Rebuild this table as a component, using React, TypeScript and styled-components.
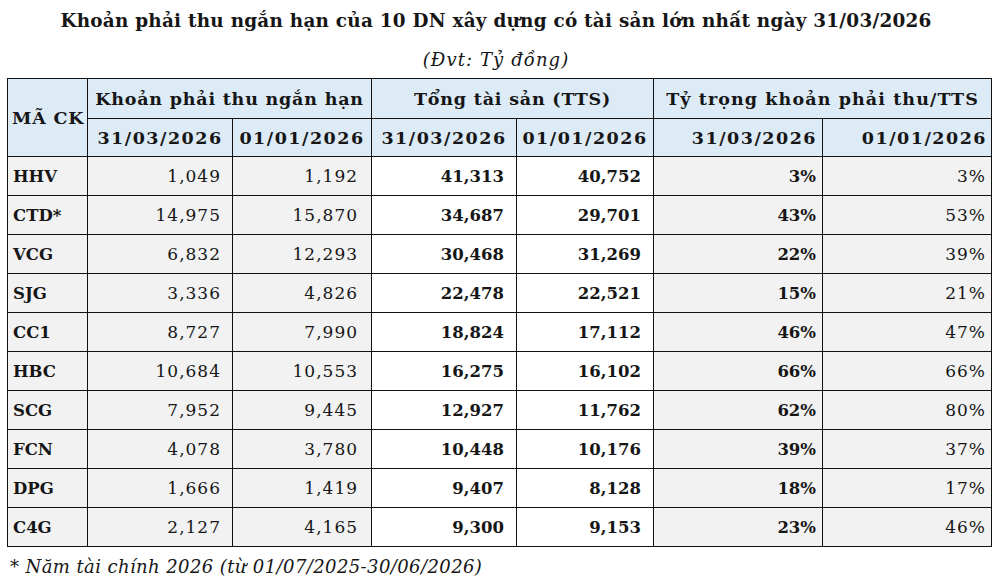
import React from "react";
import styled, { createGlobalStyle } from "styled-components";

const GlobalStyle = createGlobalStyle`
  html, body { margin: 0; padding: 0; background: #ffffff; }
  body { font-family: "DejaVu Serif", "Liberation Serif", serif; color: #161616; }
`;

const Page = styled.div`
  width: 992px;
  height: 586px;
  box-sizing: border-box;
  padding: 0 0 0 7px;
  display: flex;
  flex-direction: column;
`;

const Title = styled.h1`
  margin: 0 0 0 -7px;
  height: 40px;
  line-height: 42px;
  font-size: 18.4px;
  font-weight: 700;
  text-align: center;
  letter-spacing: 0.25px;
`;

const Unit = styled.div`
  margin: 0 0 0 -7px;
  height: 38px;
  line-height: 40px;
  font-size: 18px;
  font-style: italic;
  text-align: center;
  letter-spacing: 1.1px;
`;

const Table = styled.table`
  border-collapse: collapse;
  width: 984px;
  table-layout: fixed;
  font-size: 17px;
`;

const Th = styled.th<{ $align?: string; $pr?: number; $h?: number; $ls?: number }>`
  background: #ddebf7;
  border: 1px solid #111;
  font-weight: 700;
  font-size: 17.5px;
  letter-spacing: ${(p) => p.$ls ?? 0.8}px;
  height: ${(p) => p.$h ?? 38}px;
  padding: 0 ${(p) => p.$pr ?? 2}px 0 ${(p) => (p.$align === "left" ? 4 : 2)}px;
  text-align: ${(p) => p.$align ?? "center"};
  white-space: nowrap;
  box-sizing: border-box;
`;

const Td = styled.td<{ $bold?: boolean; $gray?: boolean; $align?: string; $pr?: number }>`
  background: ${(p) => (p.$gray ? "#f2f2f2" : "#ffffff")};
  border: 1px solid #111;
  font-weight: ${(p) => (p.$bold ? 700 : 400)};
  font-size: ${(p) => (p.$bold ? 16.5 : 17)}px;
  letter-spacing: ${(p) => (p.$bold ? 0 : 1)}px;
  height: 39px;
  padding: 0 ${(p) => p.$pr ?? 5}px 0 5px;
  text-align: ${(p) => p.$align ?? "right"};
  white-space: nowrap;
  box-sizing: border-box;
`;

const Footnote = styled.div`
  margin: 0;
  padding-left: 3px;
  height: 40px;
  line-height: 40px;
  font-size: 18px;
  font-style: italic;
  letter-spacing: 0.4px;
`;

const rows: [string, string, string, string, string, string, string][] = [
  ["HHV", "1,049", "1,192", "41,313", "40,752", "3%", "3%"],
  ["CTD*", "14,975", "15,870", "34,687", "29,701", "43%", "53%"],
  ["VCG", "6,832", "12,293", "30,468", "31,269", "22%", "39%"],
  ["SJG", "3,336", "4,826", "22,478", "22,521", "15%", "21%"],
  ["CC1", "8,727", "7,990", "18,824", "17,112", "46%", "47%"],
  ["HBC", "10,684", "10,553", "16,275", "16,102", "66%", "66%"],
  ["SCG", "7,952", "9,445", "12,927", "11,762", "62%", "80%"],
  ["FCN", "4,078", "3,780", "10,448", "10,176", "39%", "37%"],
  ["DPG", "1,666", "1,419", "9,407", "8,128", "18%", "17%"],
  ["C4G", "2,127", "4,165", "9,300", "9,153", "23%", "46%"],
];

const widths = [80, 145, 139, 145, 137, 169, 169];
const padRight = [5, 11, 13, 12, 12, 6, 5];
const boldCols = [true, false, false, true, true, true, false];
const grayCols = [true, true, true, false, false, true, true];

export default function App() {
  return (
    <>
      <GlobalStyle />
      <Page>
        <Title>Khoản phải thu ngắn hạn của 10 DN xây dựng có tài sản lớn nhất ngày 31/03/2026</Title>
        <Unit>(Đvt: Tỷ đồng)</Unit>
        <Table>
          <colgroup>
            {widths.map((w, i) => (
              <col key={i} style={{ width: w }} />
            ))}
          </colgroup>
          <thead>
            <tr>
              <Th rowSpan={2} $align="left" $h={40}>MÃ CK</Th>
              <Th colSpan={2} $h={40}>Khoản phải thu ngắn hạn</Th>
              <Th colSpan={2} $h={40}>Tổng tài sản (TTS)</Th>
              <Th colSpan={2} $h={40} $ls={1.1}>Tỷ trọng khoản phải thu/TTS</Th>
            </tr>
            <tr>
              <Th $ls={1.5}>31/03/2026</Th>
              <Th $ls={1.5}>01/01/2026</Th>
              <Th $ls={1.5}>31/03/2026</Th>
              <Th $ls={1.5}>01/01/2026</Th>
              <Th $align="right" $pr={5} $ls={1.5}>31/03/2026</Th>
              <Th $align="right" $pr={4} $ls={1.5}>01/01/2026</Th>
            </tr>
          </thead>
          <tbody>
            {rows.map((r) => (
              <tr key={r[0]}>
                {r.map((v, i) => (
                  <Td
                    key={i}
                    $bold={boldCols[i]}
                    $gray={grayCols[i]}
                    $align={i === 0 ? "left" : "right"}
                    $pr={padRight[i]}
                  >
                    {v}
                  </Td>
                ))}
              </tr>
            ))}
          </tbody>
        </Table>
        <Footnote>* Năm tài chính 2026 (từ 01/07/2025-30/06/2026)</Footnote>
      </Page>
    </>
  );
}
